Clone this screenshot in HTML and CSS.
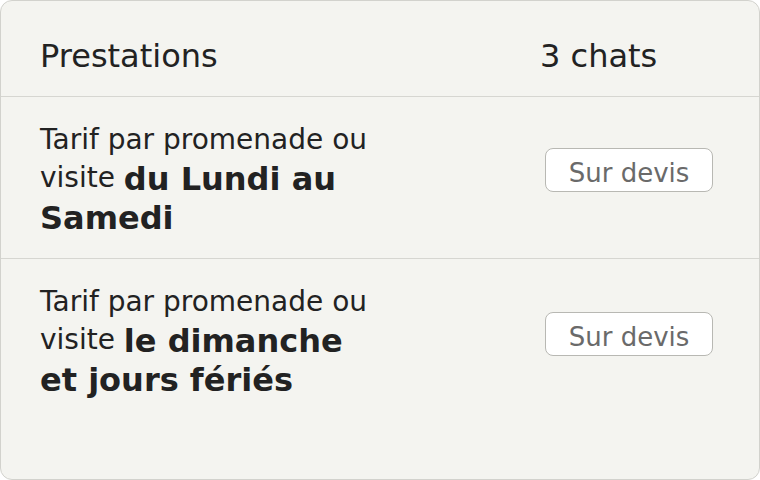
FILE: index.html
```html
<!DOCTYPE html>
<html lang="fr">
<head>
    <meta charset="UTF-8">
    <meta name="viewport" content="width=device-width, initial-scale=1.0">
    <title>Prestations</title>
    <link rel="stylesheet" href="styles.css">
</head>
<body>

    <section class="price-card">
        <div class="price-row price-head">
            <h2>Prestations</h2>
            <span class="count">3 chats</span>
        </div>

        <div class="price-row">
            <p>Tarif par promenade ou visite <strong>du Lundi au Samedi</strong></p>
            <button class="quote">Sur devis</button>
        </div>

        <div class="price-row">
            <p>Tarif par promenade ou visite <strong>le dimanche et jours fériés</strong></p>
            <button class="quote">Sur devis</button>
        </div>
    </section>

</body>
</html>
```
FILE: styles.css
```css
body {
    font-family: 'DejaVu Sans', 'Liberation Sans', sans-serif;
    margin: 0;
    padding: 0;
    background-color: #fff;
    color: #222;
}

.price-card {
    box-sizing: border-box;
    width: 760px;
    height: 480px;
    background-color: #f4f4f0;
    border: 1px solid #d2d2cd;
    border-radius: 12px;
    overflow: hidden;
}

.price-row {
    display: grid;
    grid-template-columns: 1fr 178px;
    align-items: start;
    padding: 24px 41px 21px 39px;
    border-bottom: 1px solid #d6d6d1;
}

.price-row:last-child {
    border-bottom: none;
}

.price-head {
    align-items: center;
    padding-top: 39px;
    padding-bottom: 24px;
}

.price-head h2,
.price-head .count {
    margin: 0;
    font-size: 32px;
    font-weight: normal;
    line-height: 32px;
    color: #222;
}

.price-row p {
    width: 340px;
    margin: 0;
    font-size: 28px;
    line-height: 38px;
}

.price-row strong {
    font-size: 32px;
    font-weight: bold;
    vertical-align: middle;
}

.quote {
    justify-self: center;
    box-sizing: border-box;
    width: 168px;
    height: 44px;
    margin-top: 27px;
    padding: 6px 0 0;
    font-family: inherit;
    font-size: 26px;
    color: #6a6a6a;
    background-color: #fff;
    border: 1px solid #b8b8b3;
    border-radius: 8px;
}

.price-row:last-child .quote {
    margin-top: 29px;
}
```
